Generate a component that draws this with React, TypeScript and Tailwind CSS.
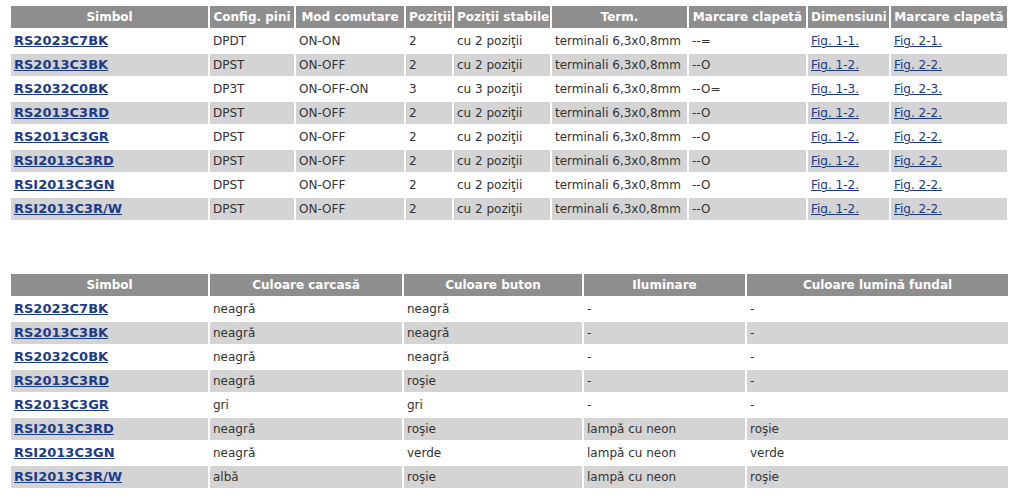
import React from 'react';

const rows1 = [
  ['RS2023C7BK', 'DPDT', 'ON-ON', '2', 'cu 2 poziţii', '--=', 'Fig. 1-1.', 'Fig. 2-1.'],
  ['RS2013C3BK', 'DPST', 'ON-OFF', '2', 'cu 2 poziţii', '--O', 'Fig. 1-2.', 'Fig. 2-2.'],
  ['RS2032C0BK', 'DP3T', 'ON-OFF-ON', '3', 'cu 3 poziţii', '--O=', 'Fig. 1-3.', 'Fig. 2-3.'],
  ['RS2013C3RD', 'DPST', 'ON-OFF', '2', 'cu 2 poziţii', '--O', 'Fig. 1-2.', 'Fig. 2-2.'],
  ['RS2013C3GR', 'DPST', 'ON-OFF', '2', 'cu 2 poziţii', '--O', 'Fig. 1-2.', 'Fig. 2-2.'],
  ['RSI2013C3RD', 'DPST', 'ON-OFF', '2', 'cu 2 poziţii', '--O', 'Fig. 1-2.', 'Fig. 2-2.'],
  ['RSI2013C3GN', 'DPST', 'ON-OFF', '2', 'cu 2 poziţii', '--O', 'Fig. 1-2.', 'Fig. 2-2.'],
  ['RSI2013C3R/W', 'DPST', 'ON-OFF', '2', 'cu 2 poziţii', '--O', 'Fig. 1-2.', 'Fig. 2-2.'],
];

const rows2 = [
  ['RS2023C7BK', 'neagră', 'neagră', '-', '-'],
  ['RS2013C3BK', 'neagră', 'neagră', '-', '-'],
  ['RS2032C0BK', 'neagră', 'neagră', '-', '-'],
  ['RS2013C3RD', 'neagră', 'roşie', '-', '-'],
  ['RS2013C3GR', 'gri', 'gri', '-', '-'],
  ['RSI2013C3RD', 'neagră', 'roşie', 'lampă cu neon', 'roşie'],
  ['RSI2013C3GN', 'neagră', 'verde', 'lampă cu neon', 'verde'],
  ['RSI2013C3R/W', 'albă', 'roşie', 'lampă cu neon', 'roşie'],
];

const th = 'h-[22px] p-0 px-[3px] bg-[#8e8e8e] text-white font-bold text-center whitespace-nowrap overflow-hidden';
const td = 'h-[22px] p-0 px-[3px] whitespace-nowrap overflow-hidden';
const sym = 'text-[13px] font-bold text-[#1a3a8c] underline';
const fig = 'text-[#1a3a8c] underline';

export default function App() {
  return (
    <div className="bg-white min-h-[499px] pt-[4px] pl-[9px] text-[12px] text-[#333]" style={{ fontFamily: '"DejaVu Sans", Verdana, sans-serif' }}>
      <table className="table-fixed border-separate border-spacing-[2px] w-[1000px]">
        <colgroup>
          <col className="w-[197px]" />
          <col className="w-[84px]" />
          <col className="w-[108px]" />
          <col className="w-[46px]" />
          <col className="w-[96px]" />
          <col className="w-[135px]" />
          <col className="w-[117px]" />
          <col className="w-[81px]" />
          <col className="w-[116px]" />
        </colgroup>
        <thead>
          <tr>
            <th className={th}>Simbol</th>
            <th className={th}>Config. pini</th>
            <th className={th}>Mod comutare</th>
            <th className={th}>Poziţii</th>
            <th className={th}>Poziţii stabile</th>
            <th className={th}>Term.</th>
            <th className={th}>Marcare clapetă</th>
            <th className={th}>Dimensiuni</th>
            <th className={th}>Marcare clapetă</th>
          </tr>
        </thead>
        <tbody>
          {rows1.map((r, i) => (
            <tr key={r[0]} className={i % 2 === 1 ? 'bg-[#d4d4d4]' : 'bg-white'}>
              <td className={td}><a href="#" className={sym}>{r[0]}</a></td>
              <td className={td}>{r[1]}</td>
              <td className={td}>{r[2]}</td>
              <td className={td}>{r[3]}</td>
              <td className={td}>{r[4]}</td>
              <td className={td}>terminali 6,3x0,8mm</td>
              <td className={td}>{r[5]}</td>
              <td className={td}><a href="#" className={fig}>{r[6]}</a></td>
              <td className={td}><a href="#" className={fig}>{r[7]}</a></td>
            </tr>
          ))}
        </tbody>
      </table>

      <table className="table-fixed border-separate border-spacing-[2px] w-[1001px] mt-[50px]">
        <colgroup>
          <col className="w-[197px]" />
          <col className="w-[192px]" />
          <col className="w-[178px]" />
          <col className="w-[161px]" />
          <col className="w-[261px]" />
        </colgroup>
        <thead>
          <tr>
            <th className={th}>Simbol</th>
            <th className={th}>Culoare carcasă</th>
            <th className={th}>Culoare buton</th>
            <th className={th}>Iluminare</th>
            <th className={th}>Culoare lumină fundal</th>
          </tr>
        </thead>
        <tbody>
          {rows2.map((r, i) => (
            <tr key={r[0]} className={i % 2 === 1 ? 'bg-[#d4d4d4]' : 'bg-white'}>
              <td className={td}><a href="#" className={sym}>{r[0]}</a></td>
              <td className={td}>{r[1]}</td>
              <td className={td}>{r[2]}</td>
              <td className={td}>{r[3]}</td>
              <td className={td}>{r[4]}</td>
            </tr>
          ))}
        </tbody>
      </table>
    </div>
  );
}
